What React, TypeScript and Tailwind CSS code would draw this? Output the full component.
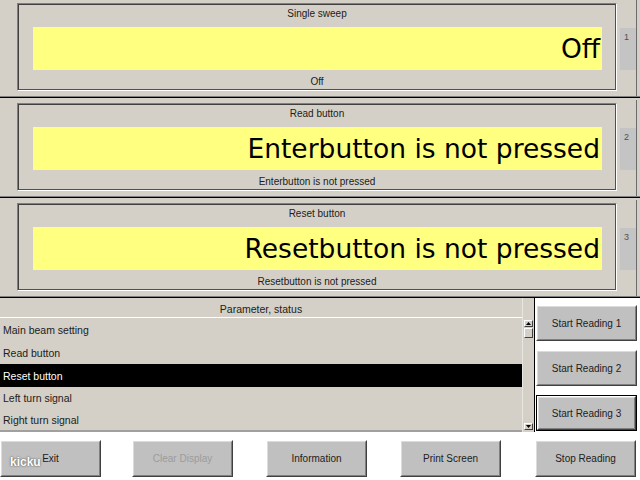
const panels = [
  { n: "1", title: "Single sweep", value: "Off", status: "Off" },
  { n: "2", title: "Read button", value: "Enterbutton is not pressed", status: "Enterbutton is not pressed" },
  { n: "3", title: "Reset button", value: "Resetbutton is not pressed", status: "Resetbutton is not pressed" },
];

const rows = [
  { label: "Main beam setting", h: "h-[23px]" },
  { label: "Read button", h: "h-[23px]" },
  { label: "Reset button", h: "h-[23px]", selected: true },
  { label: "Left turn signal", h: "h-[22px]" },
  { label: "Right turn signal", h: "h-[21px]" },
];

function Button({
  label,
  className = "",
  disabled = false,
  focused = false,
}: {
  label: string;
  className?: string;
  disabled?: boolean;
  focused?: boolean;
}) {
  return (
    <div className={`${className} ${focused ? "border border-black" : ""}`}>
      <div className="h-full border border-t-white border-l-white border-b-[#404040] border-r-[#404040]">
        <div
          className={`flex h-full items-center justify-center border border-t-[#dcdcdc] border-l-[#dcdcdc] border-b-[#808080] border-r-[#808080] bg-[#c0c0c0] text-[10px] ${
            disabled ? "text-[#9c9c9c]" : "text-[#202020]"
          }`}
        >
          {label}
        </div>
      </div>
    </div>
  );
}

function Panel({ n, title, value, status }: { n: string; title: string; value: string; status: string }) {
  return (
    <div className="flex h-[96px] w-[637px] items-start border-r border-[#6b6b6b] pl-[17px] pt-[3px]">
      {/* group box */}
      <div className="h-[88px] w-[600px] border border-t-[#808080] border-l-[#808080] border-b-white border-r-white">
        <div className="flex h-full flex-col border border-t-[#404040] border-l-[#404040] border-b-[#505050] border-r-[#505050]">
          <div className="h-[16px] pt-[1px] text-center text-[10px] leading-[16px] text-[#202020]">{title}</div>
          <div className="ml-[14px] mr-[13px] mt-[6px] flex h-[43px] items-center justify-end bg-[#ffff80] pr-[2px] pt-[2px] font-['DejaVu_Sans',sans-serif] text-[26.5px] leading-none text-black">
            {value}
          </div>
          <div className="mt-[3px] h-[16px] pt-[1px] text-center text-[10px] leading-[16px] text-[#202020]">{status}</div>
        </div>
      </div>
      {/* side tab */}
      <div className="ml-[3px] mt-[25px] h-[42px] w-[16px] bg-[#c4c4c4] pl-[4px] pt-[3px] text-[9px] text-[#505050]">
        {n}
      </div>
    </div>
  );
}

function Arrow({ up }: { up?: boolean }) {
  return (
    <svg width="5" height="3" viewBox="0 0 5 3">
      <path d={up ? "M2.5 0 L5 3 L0 3 Z" : "M0 0 L5 0 L2.5 3 Z"} fill="#000" />
    </svg>
  );
}

export default function App() {
  return (
    <div className="relative h-[480px] w-[640px] overflow-hidden bg-white font-['Liberation_Sans',Arial,sans-serif]">
      {/* Measurement panels */}
      <div className="flex flex-col bg-[#d4d0c8]">
        {panels.map((p, i) => (
          <div key={p.n} className={`flex flex-col ${i < 2 ? "h-[100px]" : "h-[98px]"}`}>
            <Panel {...p} />
            <div className="h-px bg-[#808080]" />
            <div className="h-px bg-black" />
          </div>
        ))}
      </div>

      {/* Parameter list + reading buttons */}
      <div className="flex h-[134px]">
        <div className="flex w-[535px] border-r border-black bg-[#d4d0c8]">
          <div className="flex w-[522px] flex-col border-b-2 border-[#a0a0a0]">
            <div className="h-[20px] border-b border-white pt-[2px] text-center text-[10.5px] leading-[18px] text-[#202020]">
              Parameter, status
            </div>
            {rows.map((r) => (
              <div
                key={r.label}
                className={`${r.h} flex items-center pl-[3px] pt-[2px] text-[10.5px] ${
                  r.selected ? "bg-black text-white" : "text-[#202020]"
                }`}
              >
                {r.label}
              </div>
            ))}
          </div>
          {/* scrollbar */}
          <div className="flex w-[12px] flex-col border-l border-[#e8e6e0] pb-[2px] pt-[22px]">
            <div className="mx-px flex h-[7px] items-center justify-center border border-t-white border-l-white border-b-[#404040] border-r-[#404040] bg-[#d4d0c8]">
              <Arrow up />
            </div>
            <div className="mx-px mt-[1px] h-[10px] border border-t-white border-l-white border-b-[#404040] border-r-[#404040] bg-[#d4d0c8]" />
            <div className="flex-1" />
            <div className="mx-px flex h-[7px] items-center justify-center border border-t-white border-l-white border-b-[#404040] border-r-[#404040] bg-[#d4d0c8]">
              <Arrow />
            </div>
          </div>
        </div>
        <div className="flex flex-1 flex-col gap-[9px] bg-white pl-[1px] pt-[7px]">
          <Button label="Start Reading 1" className="h-[36px] w-[101px]" />
          <Button label="Start Reading 2" className="h-[36px] w-[101px]" />
          <Button label="Start Reading 3" className="h-[36px] w-[101px]" focused />
        </div>
      </div>

      {/* Bottom buttons */}
      <div className="flex h-[48px] items-start pt-[8px]">
        <Button label="Exit" className="h-[37px] w-[101px]" />
        <Button label="Clear Display" className="ml-[31px] h-[37px] w-[101px]" disabled />
        <Button label="Information" className="ml-[33px] h-[37px] w-[101px]" />
        <Button label="Print Screen" className="ml-[33px] h-[37px] w-[101px]" />
        <Button label="Stop Reading" className="ml-[34px] h-[37px] w-[101px]" />
      </div>

      {/* watermark */}
      <div className="absolute left-[10px] top-[453px] text-[12px] font-bold text-white [text-shadow:0_0_2px_#333]">
        kicku
      </div>
    </div>
  );
}
